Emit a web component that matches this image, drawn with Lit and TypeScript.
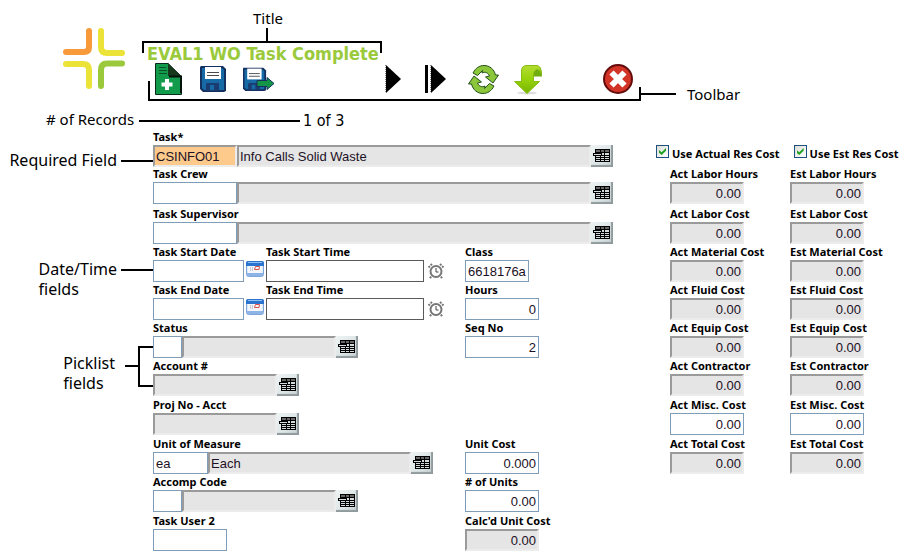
import { LitElement, html, css, svg, nothing, TemplateResult } from "lit";
import { customElement } from "lit/decorators.js";
import { classMap } from "lit/directives/class-map.js";

type Kind = "plain" | "sunk" | "required";

interface Box {
  value?: string;
  kind: Kind;
  size: string;
}

interface Pick {
  id: string;
  label: string;
  row: string;
  size: string;
  code?: Box;
  text: string;
}

interface Amount {
  id: string;
  label: string;
  row: string;
  col: string;
  value: string;
  sunk?: boolean;
}

const picks: Pick[] = [
  { id: "task", label: "Task*", row: "r1", size: "wide", code: { value: "CSINFO01", kind: "required", size: "w84" }, text: "Info Calls Solid Waste" },
  { id: "crew", label: "Task Crew", row: "r2", size: "wide", code: { kind: "plain", size: "w84" }, text: "" },
  { id: "supervisor", label: "Task Supervisor", row: "r3", size: "wide", code: { kind: "plain", size: "w84" }, text: "" },
  { id: "status", label: "Status", row: "r6", size: "medium", code: { kind: "plain", size: "w29" }, text: "" },
  { id: "account", label: "Account #", row: "r7", size: "small", text: "" },
  { id: "project", label: "Proj No - Acct", row: "r8", size: "small", text: "" },
  { id: "measure", label: "Unit of Measure", row: "r9", size: "large", code: { value: "ea", kind: "plain", size: "w55" }, text: "Each" },
  { id: "accomp", label: "Accomp Code", row: "r10", size: "medium", code: { kind: "plain", size: "w29" }, text: "" },
];

const costs: [string, string, boolean][] = [
  ["r2", "Labor Hours", true],
  ["r3", "Labor Cost", true],
  ["r4", "Material Cost", true],
  ["r5", "Fluid Cost", true],
  ["r6", "Equip Cost", true],
  ["r7", "Contractor", true],
  ["r8", "Misc. Cost", false],
  ["r9", "Total Cost", true],
];

const amounts: Amount[] = [
  { id: "hours", label: "Hours", row: "r5", col: "c3", value: "0" },
  { id: "seq", label: "Seq No", row: "r6", col: "c3", value: "2" },
  { id: "unit-cost", label: "Unit Cost", row: "r9", col: "c3", value: "0.000" },
  { id: "units", label: "# of Units", row: "r10", col: "c3", value: "0.00" },
  { id: "calc", label: "Calc'd Unit Cost", row: "r11", col: "c3", value: "0.00", sunk: true },
  ...costs.flatMap(([row, name, sunk], i) => [
    { id: `act-${i}`, label: `Act ${name}`, row, col: "c4", value: "0.00", sunk },
    { id: `est-${i}`, label: `Est ${name}`, row, col: "c5", value: "0.00", sunk },
  ]),
];

const floppy = svg`
  <path d="M4 3H26L29 6V28L27 29H6L3 26V4Z" fill="#14305f"/>
  <path d="M5 5H25L27 7V27H7L5 25Z" fill="#166ba6"/>
  <rect x="8" y="4" width="16" height="12" fill="#fff"/>
  <path d="M10 9.5H22M10 12.5H22" stroke="#4a4a4a"/>
  <path d="M10 20H22V28H9V21Z" fill="#1b3c70"/>
  <rect x="13" y="22" width="4" height="5" fill="#166ba6"/>`;

const arrow = "M5 10C7.500 5 11.500 2.500 16 2.500C21.500 2.500 26 6 27.500 12L30.500 12L25 20L17.500 14L21.500 13C20 9.500 17 8.500 14 10L14.500 7.500L9.500 12.500Z";

const tools: { name: string; cell: string; art: TemplateResult }[] = [
  {
    name: "New", cell: "t1",
    art: svg`
      <path d="M2.500 .5H15L28.500 13.5V31.5H2.500Z" fill="#129b4a" stroke="#0a2a1a"/>
      <path d="M15 0L28 13H15Z" fill="#18381c"/>
      <path d="M16 13.500H28V30" fill="none" stroke="#04140c" stroke-width="2"/>
      <path d="M6 4.500H13M6 7.500H14M6 10.500H14" stroke="#07532a"/>
      <path d="M14 16V27M8.500 21.500H19.500" stroke="#fff" stroke-width="4"/>` as TemplateResult,
  },
  { name: "Save", cell: "t2", art: svg`<g transform="translate(-1 0)">${floppy}</g>` as TemplateResult },
  {
    name: "Save and exit", cell: "t3",
    art: svg`
      <g transform="translate(-3 2) scale(.9)">${floppy}</g>
      <path d="M14 17.500H24V14.500L31 20.500L24 26.500V23.500H14Z" fill="#139447" stroke="#14305f"/>` as TemplateResult,
  },
  {
    name: "Next record", cell: "t6",
    art: svg`<path d="M8 2L23 16L8 30Z"/><path d="M7.500 2V30" stroke="#888" stroke-dasharray="1 1"/>` as TemplateResult,
  },
  {
    name: "Last record", cell: "t7",
    art: svg`<rect x="2" y="2" width="3" height="28"/><path d="M8 2L23 16L8 30Z"/><path d="M7.500 2V30" stroke="#888" stroke-dasharray="1 1"/>` as TemplateResult,
  },
  {
    name: "Refresh", cell: "t8",
    art: svg`
      <g fill="#8cc63a" stroke="#24501c" stroke-linejoin="round">
        <path d=${arrow} />
        <path d=${arrow} transform="rotate(180 15.500 16.500)" />
      </g>` as TemplateResult,
  },
  {
    name: "Download", cell: "t9",
    art: svg`
      <defs><linearGradient id="leaf" x2="0" y2="1"><stop stop-color="#b4dc32"/><stop offset=".5" stop-color="#96d20a"/><stop offset="1" stop-color="#78b400"/></linearGradient></defs>
      <ellipse cx="14" cy="30" rx="10" ry="1.500" fill="#ddd"/>
      <path d="M20 13.500V9Q20 5 24 3L27 4Q29 7 29 13.500Z" fill="#6fac10"/>
      <path d="M8.500 18.500V8Q8.500 2.500 14 2.500H24Q28 3 28.500 11Q26 5 22.500 7Q20.500 9 20.500 13V18.500H26.500L14 30.500L1.500 18.500Z" fill="url(#leaf)" stroke="#86bd12"/>` as TemplateResult,
  },
  {
    name: "Close", cell: "t11",
    art: svg`
      <circle cx="15" cy="16" r="14" fill="#d23428" stroke="#640c0c" stroke-width="2"/>
      <path d="M8.500 9.500L21.500 22.500M21.500 9.500L8.500 22.500" stroke="#fff" stroke-width="6"/>` as TemplateResult,
  },
];

@customElement("app-root")
export class AppRoot extends LitElement {
  static styles = css`
    :host {
      display: block;
      background: #fff;
      color: #000;
      font-family: "Liberation Sans", sans-serif;
      font-size: 13px;
    }
    * { box-sizing: border-box; }
    svg { display: block; }

    .note {
      font-family: "Noto Sans", sans-serif;
      font-size: 15px;
      line-height: 20px;
      white-space: nowrap;
    }
    .line { height: 2px; width: 32px; background: #000; flex: none; }

    header { display: grid; grid-template-columns: 142px 1fr; padding-top: 8px; }
    .logo { width: 66px; height: 66px; margin: 18px 0 0 62px; }
    .heading { width: 240px; }
    .heading .note { text-align: center; padding-left: 12px; }
    .stem { width: 2px; height: 13px; margin-left: 124px; background: #000; }
    .bracket { position: relative; border-top: 2px solid #000; padding-left: 5px; }
    .bracket::before, .bracket::after {
      content: ""; position: absolute; top: 0; width: 2px; height: 10px; background: #000;
    }
    .bracket::before { left: 0; }
    .bracket::after { right: 0; }
    h1 {
      margin: 0;
      padding-top: 2px;
      font: bold 18px/18px "DejaVu Sans Condensed", "DejaVu Sans", sans-serif;
      color: #9aca3c;
      white-space: nowrap;
    }
    .bar { display: flex; align-items: flex-end; margin-left: 4px; }
    .tools {
      position: relative;
      display: grid;
      grid-template-columns: repeat(11, 45px);
      padding-bottom: 6px;
    }
    .tools::before, .tools::after { content: ""; position: absolute; bottom: 0; background: #000; }
    .tools::before { left: 2px; right: 0; height: 18px; background: none; border: solid #000; border-width: 0 0 2px 2px; }
    .tools::after { right: 0; width: 2px; height: 14px; }
    .tool { position: relative; z-index: 1; justify-self: center; width: 32px; height: 32px; padding: 0; border: 0; background: none; }
    .t1 { grid-column: 1; } .t2 { grid-column: 2; } .t3 { grid-column: 3; }
    .t6 { grid-column: 6; } .t7 { grid-column: 7; } .t8 { grid-column: 8; }
    .t9 { grid-column: 9; } .t11 { grid-column: 11; }
    .bar .line { width: 35px; margin: 0 11px 6px 0; }
    .bar .note { line-height: 14px; }

    .records { display: flex; align-items: center; margin: 10px 0 0 46px; height: 19px; }
    .records .note { width: 93px; padding-bottom: 3px; }
    .records .line { width: 161px; }
    .count { font-family: "DejaVu Sans Condensed", "DejaVu Sans", sans-serif; font-size: 16px; padding-left: 3px; }

    form {
      display: grid;
      grid-template-columns: 153px minmax(0, 312fr) minmax(0, 205fr) minmax(0, 120fr) minmax(0, 115fr);
      grid-template-rows: 37px 40px repeat(4, 38px) 39px 39px 38px 39px auto;
    }
    .r1 { grid-row: 1; } .r2 { grid-row: 2; } .r3 { grid-row: 3; } .r4 { grid-row: 4; }
    .r5 { grid-row: 5; } .r6 { grid-row: 6; } .r7 { grid-row: 7; } .r8 { grid-row: 8; }
    .r9 { grid-row: 9; } .r10 { grid-row: 10; } .r11 { grid-row: 11; }
    .c2 { grid-column: 2; } .c3 { grid-column: 3; } .c4 { grid-column: 4; } .c5 { grid-column: 5; }
    .c2.wide { grid-column: 2 / 4; }

    .callout { grid-column: 1; display: flex; justify-content: flex-end; align-items: flex-start; gap: 4px; }
    .callout .note { font-size: 16px; }
    .callout .line { margin-top: 10px; }
    .required-note { padding-top: 20px; }
    .date-note { padding-top: 14px; }
    .pick-note { grid-row: 6 / 8; padding-top: 25px; gap: 0; }
    .pick-note .note { padding-top: 7px; }
    .pick-note .line { width: 13px; margin: 19px 0 0 10px; }
    .fork { width: 15px; height: 41px; border: 2px solid #000; border-right: 0; }

    .field > label, .checks {
      font: bold 11px/13px "Noto Sans", sans-serif;
      white-space: nowrap;
    }
    .field > label { display: block; padding-bottom: 2px; }
    input[type="text"] {
      display: block;
      min-width: 0;
      height: 22px;
      margin: 0;
      padding: 0 2px;
      border: 1px solid #7f9db9;
      border-radius: 0;
      background: #fff;
      color: #1c1024;
      font: inherit;
      outline: 0;
    }
    input[type="text"].sunk, input[type="text"].required {
      padding: 0 1px;
      border: 2px solid;
      border-color: #9a9a9a #ececec #ececec #9a9a9a;
      background: #e5e5e5;
    }
    input[type="text"].required { background: #fdca8c; }
    input.right { width: 74px; text-align: right; }
    .w84 { width: 84px; } .w29 { width: 29px; } .w55 { width: 55px; }
    input.w64 { width: 64px; }
    input.w74 { width: 74px; }
    input.w91 { width: 91px; }
    input[type="text"].w158 { width: 158px; border-color: #5a5a5a; }

    .pick { display: flex; }
    .pick .grow { flex: 1; }
    .wide .pick { width: 460px; }
    .large .pick { width: 280px; }
    .medium .pick { width: 205px; }
    .small .pick { width: 146px; }
    .lookup {
      flex: none; width: 22px; height: 22px; padding: 2px;
      border: 0;
      background: linear-gradient(135deg, #eef3f3, #dbe4e5 60%, #c3cdcf);
      box-shadow: inset -2px -2px 1px #8f9a9c;
    }

    .times { display: flex; }
    .times .field:first-child { width: 113px; }
    .with-icon { display: flex; }
    .mini { padding: 0; border: 0; background: none; width: 18px; height: 18px; margin-left: 2px; }
    .clock { margin: 2px 0 0 3px; }

    .checks { grid-column: 4 / 6; display: flex; gap: 14px; margin: 15px 0 0 -14px; }
    .checks label { display: flex; align-items: flex-start; gap: 3px; }
    .checks span { padding-top: 2px; }
    .checks input {
      position: relative;
      appearance: none;
      flex: none; width: 13px; height: 13px; margin: 0;
      border: 1px solid #1c5180;
      background: linear-gradient(135deg, #dcdcd7, #fff);
    }
    .checks input:checked::after {
      content: ""; position: absolute; inset: 2px; background: #21a121;
      clip-path: polygon(0 28%, 38% 60%, 100% 0, 100% 38%, 38% 100%, 0 68%);
    }
  `;

  private lookup(name: string) {
    return html`<button class="lookup" type="button" aria-label=${`Look up ${name}`}>
      <svg width="18" height="18" viewBox="0 0 18 18" shape-rendering="crispEdges" aria-hidden="true">
        <path d="M2 2H17V15H2V9H0V6H2Z" />
        <path d="M3 3H7V5H3ZM8 3H11V5H8ZM12 3H16V5H12Z" fill="#666" />
        <path d="M1 7H8V8H1ZM9 6H11V8H9ZM12 6H16V8H12ZM3 9H7V10H3ZM8 9H11V10H8ZM12 9H16V10H12ZM3 11H7V12H3ZM8 11H11V12H8ZM12 11H16V12H12ZM3 13H7V14H3ZM8 13H11V14H8ZM12 13H16V14H12Z" fill="#d3dddd" />
      </svg>
    </button>`;
  }

  private pick(p: Pick) {
    const { id, label, code } = p;
    return html`<div class=${classMap({ field: true, c2: true, [p.row]: true, [p.size]: true })}>
      <label for=${id}>${label}</label>
      <div class="pick">
        ${code
          ? html`<input type="text" id=${id} class=${`${code.kind} ${code.size}`} .value=${code.value ?? ""} />`
          : nothing}
        <input type="text" class="sunk grow" readonly id=${code ? `${id}-text` : id}
          aria-label=${`${label} description`} .value=${p.text} />
        ${this.lookup(label)}
      </div>
    </div>`;
  }

  private amount(a: Amount) {
    return html`<div class=${`field ${a.col} ${a.row}`}>
      <label for=${a.id}>${a.label}</label>
      <input type="text" id=${a.id} class=${classMap({ right: true, sunk: !!a.sunk })} ?readonly=${a.sunk} .value=${a.value} />
    </div>`;
  }

  private times(name: string, row: string) {
    const id = name.toLowerCase();
    return html`<div class=${`times c2 ${row}`}>
      <div class="field">
        <label for=${`${id}-date`}>Task ${name} Date</label>
        <div class="with-icon">
          <input type="text" id=${`${id}-date`} class="w91" />
          <button class="mini" type="button" aria-label=${`Choose ${id} date`}>
            <svg width="18" height="16" viewBox="0 0 18 16" aria-hidden="true">
              <rect x=".5" y=".5" width="17" height="15" rx="2" fill="#dbe8f8" stroke="#7fa6da" />
              <path d="M0 5V2Q0 0 2 0H16Q18 0 18 2V5Z" fill="#2a74d0" />
              <path d="M2 1.500H16" stroke="#8fc0f5" />
              <rect x="2" y="5" width="14" height="7" fill="#f4f6f9" />
              <path d="M4.500 6V10M6.500 6V10" stroke="#c3cad6" />
              <path d="M9.500 5.500H13.500L13 8.500H8.500Z" fill="none" stroke="#d8514c" />
              <path d="M1 13.500H17" stroke="#8db4e6" stroke-width="3" />
            </svg>
          </button>
        </div>
      </div>
      <div class="field">
        <label for=${`${id}-time`}>Task ${name} Time</label>
        <div class="with-icon">
          <input type="text" id=${`${id}-time`} class="w158" />
          <button class="mini clock" type="button" aria-label=${`Choose ${id} time`}>
            <svg width="18" height="17" viewBox="0 0 18 17" fill="none" stroke="#777" aria-hidden="true">
              <circle cx="9" cy="8.500" r="5.500" stroke-width="2" />
              <path d="M9 5V9H11.500" stroke="#444" />
              <path d="M1.500 4.500L5 1M13 1L16.500 4.500M4 13.500L3 15.500M14 13.500L15 15.500" stroke-width="2" stroke-dasharray="2 1" />
            </svg>
          </button>
        </div>
      </div>
    </div>`;
  }

  render() {
    return html`
      <header>
        <svg class="logo" viewBox="62 26 66 66" fill="none" stroke-width="6" stroke-linecap="round" role="img" aria-label="Logo">
          <path d="M89 31V47Q89 52 84 52H66" stroke="#f89a3a" />
          <path d="M101 31V47Q101 53 107 53H122" stroke="#ebe337" />
          <path d="M66 64H83Q89 64 89 70V86" stroke="#ebe337" />
          <path d="M101 86V70Q101 63.500 107 63.500H122" stroke="#9aca3c" />
        </svg>
        <div>
          <div class="heading">
            <div class="note">Title</div>
            <div class="stem"></div>
            <div class="bracket"><h1>EVAL1 WO Task Complete</h1></div>
          </div>
          <div class="bar">
            <div class="tools" role="toolbar" aria-label="Toolbar">
              ${tools.map(
                (t) => html`<button type="button" class=${`tool ${t.cell}`} aria-label=${t.name}>
                  <svg width="32" height="32" viewBox="0 0 32 32" aria-hidden="true">${t.art}</svg>
                </button>`
              )}
            </div>
            <div class="line"></div>
            <div class="note">Toolbar</div>
          </div>
        </div>
      </header>
      <div class="records">
        <div class="note"># of Records</div>
        <div class="line"></div>
        <div class="count">1 of 3</div>
      </div>
      <form>
        <div class="callout required-note r1"><div class="note">Required Field</div><div class="line"></div></div>
        <div class="callout date-note r4"><div class="note">Date/Time<br />fields</div><div class="line"></div></div>
        <div class="callout pick-note"><div class="note">Picklist<br />fields</div><div class="line"></div><div class="fork"></div></div>
        ${picks.slice(0, 3).map((p) => this.pick(p))}
        ${this.times("Start", "r4")} ${this.times("End", "r5")}
        ${picks.slice(3).map((p) => this.pick(p))}
        <div class="field c2 r11"><label for="user2">Task User 2</label><input type="text" id="user2" class="w74" /></div>
        <div class="field c3 r4"><label for="class">Class</label><input type="text" id="class" class="w64" .value=${"6618176a-"} /></div>
        ${amounts.map((a) => this.amount(a))}
        <div class="checks r1">
          <label><input type="checkbox" checked /><span>Use Actual Res Cost</span></label>
          <label><input type="checkbox" checked /><span>Use Est Res Cost</span></label>
        </div>
      </form>
    `;
  }
}
